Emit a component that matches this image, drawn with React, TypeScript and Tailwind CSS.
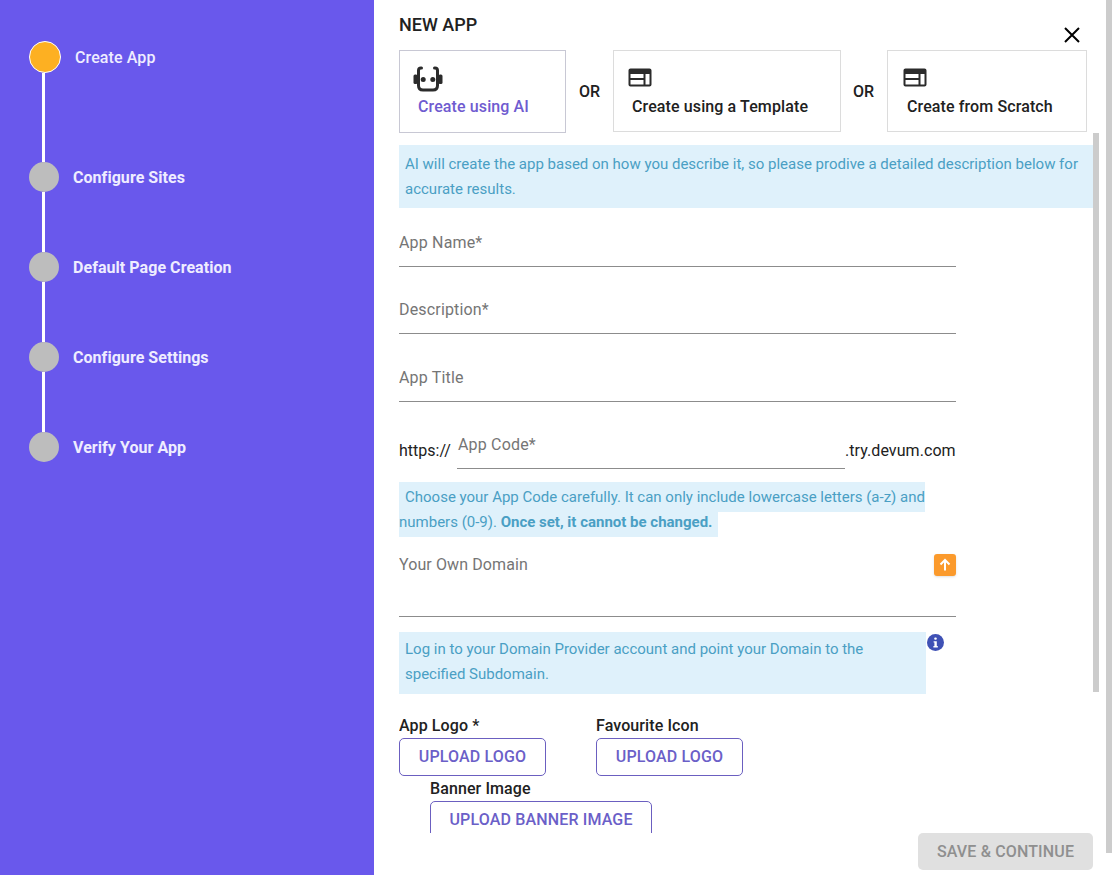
import React from "react";

const font = { fontFamily: "Roboto, 'Liberation Sans', sans-serif" };

function Bot() {
  return (
    <svg width="30" height="26" viewBox="0 0 30 26" fill="none">
      <path d="M8.5 2H8C6.6 2 5.5 3 5.5 4.5V19.5C5.5 22.5 7 24 10 24H20C23 24 24.5 22.5 24.5 19.5V4.5C24.5 3 23.4 2 22 2H21.5" stroke="#2b2b2b" strokeWidth="3" strokeLinecap="round" />
      <rect x="0.5" y="8.5" width="4" height="9.5" rx="1.5" fill="#2b2b2b" />
      <rect x="25.5" y="8.5" width="4" height="9.5" rx="1.5" fill="#2b2b2b" />
      <circle cx="10.2" cy="13.5" r="2.5" fill="#2b2b2b" />
      <circle cx="19.8" cy="13.5" r="2.5" fill="#2b2b2b" />
    </svg>
  );
}

function Layout() {
  return (
    <svg width="24" height="19" viewBox="0 0 24 19" fill="none">
      <path fillRule="evenodd" clipRule="evenodd" d="M2.5 0.5H21.5C22.6 0.5 23.5 1.4 23.5 2.5V16.5C23.5 17.6 22.6 18.5 21.5 18.5H2.5C1.4 18.5 0.5 17.6 0.5 16.5V2.5C0.5 1.4 1.4 0.5 2.5 0.5ZM2.5 6V10H15.5V6H2.5ZM17.5 6V16.5H21.5V6H17.5ZM2.5 12V16.5H15.5V12H2.5Z" fill="#2b2b2b" />
    </svg>
  );
}

function Step({ label, active, bold, line }: { label: string; active?: boolean; bold?: boolean; line?: string }) {
  return (
    <div className="flex flex-col">
      <div className="flex items-center gap-[14px]">
        {active ? (
          <div className="h-[32px] w-[32px] rounded-full border border-white bg-[#fdb022]" />
        ) : (
          <div className="h-[30px] w-[30px] rounded-full bg-[#bdbdbd]" />
        )}
        <span className={bold ? "pt-[2px] text-[16px] font-bold tracking-[0.05px] text-[#efedff]" : "pt-[2px] text-[16px] font-medium tracking-[0.1px] text-[#efedff]"}>{label}</span>
      </div>
      {line ? <div className={line} /> : null}
    </div>
  );
}

function Card({ w, h, label, purple, icon, iconBox, textBox }: { w: string; h: string; label: string; purple?: boolean; icon: React.ReactNode; iconBox: string; textBox: string }) {
  return (
    <div className={`${w} ${h} flex shrink-0 flex-col border ${purple ? "border-[#c8c8d4]" : "border-[#dcdcdc]"}`}>
      <div className={`${iconBox} flex items-end`}>{icon}</div>
      <div className={`${textBox} text-[16px] font-medium leading-[24px] tracking-[0.11px] ${purple ? "text-[#6f5bd0]" : "text-[#212121]"}`}>{label}</div>
    </div>
  );
}

function Field({ label, h }: { label: string; h: string }) {
  return (
    <div className={`${h} w-[557px] border-b border-[#8c8c8c] pt-[1px] text-[16px] leading-[24px] tracking-[0.17px] text-[#757575]`}>
      {label}
    </div>
  );
}

function UploadButton({ label, w }: { label: string; w: string }) {
  return (
    <div className={`${w} flex h-[38px] shrink-0 items-center justify-center rounded-[5px] border border-[#6b5fc0] text-[16px] font-medium tracking-[0.15px] text-[#6b5fc8]`}>
      {label}
    </div>
  );
}

export default function App() {
  return (
    <div className="flex h-[875px] w-[1112px] overflow-hidden bg-white" style={font}>
      <aside className="flex h-full w-[374px] shrink-0 flex-col bg-[#6958ec] pl-[29px] pt-[41px]">
        <Step label="Create App" active line="ml-[13px] h-[89px] w-[3px] bg-white" />
        <Step label="Configure Sites" bold line="ml-[13px] h-[60px] w-[3px] bg-white" />
        <Step label="Default Page Creation" bold line="ml-[13px] h-[60px] w-[3px] bg-white" />
        <Step label="Configure Settings" bold line="ml-[13px] h-[60px] w-[3px] bg-white" />
        <Step label="Verify Your App" bold />
      </aside>

      <main className="relative flex h-full w-[732px] shrink-0 flex-col pl-[25px]">
        <h1 className="pt-[14px] text-[18px] font-medium leading-[22px] text-[#212121]">NEW APP</h1>
        <svg className="absolute left-[690px] top-[27px]" width="16" height="16" viewBox="0 0 16 16" fill="none">
          <path d="M1 1L15 15M15 1L1 15" stroke="#000" strokeWidth="2" />
        </svg>

        <div className="mt-[14px] flex h-[83px] items-start">
          <Card w="w-[167px]" h="h-[83px]" label="Create using AI" purple iconBox="h-[41px] pl-[13px]" textBox="pl-[18px] pt-[3px]" icon={<Bot />} />
          <div className="flex h-[83px] w-[47px] shrink-0 items-center pl-[13px] text-[16px] font-medium text-[#212121]">OR</div>
          <Card w="w-[228px]" h="h-[82px]" label="Create using a Template" iconBox="h-[36px] pl-[14px]" textBox="pl-[18px] pt-[8px]" icon={<Layout />} />
          <div className="flex h-[83px] w-[46px] shrink-0 items-center pl-[12px] text-[16px] font-medium text-[#212121]">OR</div>
          <Card w="w-[200px]" h="h-[82px]" label="Create from Scratch" iconBox="h-[36px] pl-[15px]" textBox="pl-[19px] pt-[8px]" icon={<Layout />} />
        </div>

        <div className="flex h-[700px] shrink-0">
          <div className="h-full w-[694px] shrink-0 overflow-hidden pt-[12px]">
            <div className="h-[63px] bg-[#dff1fb] px-[6px] pt-[7px] text-[15px] leading-[25px] text-[#4a9fc4]">
              AI will create the app based on how you describe it, so please prodive a detailed description below for accurate results.
            </div>

            <Field label="App Name*" h="mt-[22px] h-[37px]" />
            <Field label="Description*" h="mt-[30px] h-[37px]" />
            <Field label="App Title" h="mt-[31px] h-[37px]" />

            <div className="mt-[31px] flex h-[36px] w-[557px] items-end">
              <div className="w-[58px] shrink-0 pb-[6px] text-[16px] leading-[24px] text-[#212121]">https://</div>
              <div className="h-[36px] w-[388px] shrink-0 border-b border-[#8c8c8c] pl-[1px] text-[16px] leading-[24px] tracking-[0.17px] text-[#757575]">App Code*</div>
              <div className="pb-[6px] text-[16px] leading-[24px] tracking-[0.07px] text-[#212121]">.try.devum.com</div>
            </div>

            <div className="mt-[16px] w-[557px] text-[15px] leading-[25px] text-[#4a9fc4]">
              <span className="bg-[#dff1fb] box-decoration-slice py-[6px] pl-[6px] pr-[6px]">
                Choose your App Code carefully. It can only include lowercase letters (a-z) and numbers (0-9). <b>Once set, it cannot be changed.</b>
              </span>
            </div>

            <div className="relative mt-[18px] h-[64px] w-[557px] border-b border-[#8c8c8c] text-[16px] leading-[24px] tracking-[0.1px] text-[#757575]">
              Your Own Domain
              <div className="absolute right-0 top-[1px] flex h-[22px] w-[22px] items-center justify-center rounded-[3px] bg-[#fb9a2c] shadow-sm">
                <svg width="14" height="14" viewBox="0 0 14 14" fill="none">
                  <path d="M7 12.5V2M2.5 6.5L7 2L11.5 6.5" stroke="#fff" strokeWidth="2" />
                </svg>
              </div>
            </div>

            <div className="relative mt-[15px] h-[62px] w-[527px] bg-[#dff1fb] px-[6px] pt-[5px] text-[15px] leading-[25px] text-[#4a9fc4]">
              Log in to your Domain Provider account and point your Domain to the specified Subdomain.
              <div className="absolute left-[528px] top-[2px] flex h-[17px] w-[17px] items-center justify-center rounded-full bg-[#3f51b5]">
                <svg width="9" height="11" viewBox="0 0 9 11" fill="#fff">
                  <rect x="3.2" y="0.6" width="2.6" height="2.2" rx="1" />
                  <path d="M2.6 4.2H5.8V9H6.8V10.4H2.4V9H3.4V5.6H2.6Z" />
                </svg>
              </div>
            </div>

            <div className="mt-[22px] flex">
              <div className="w-[197px] shrink-0">
                <div className="text-[16px] font-medium leading-[20px] tracking-[0.1px] text-[#212121]">App Logo *</div>
                <UploadButton label="UPLOAD LOGO" w="w-[147px] mt-[2px]" />
              </div>
              <div>
                <div className="text-[16px] font-medium leading-[20px] tracking-[0.1px] text-[#212121]">Favourite Icon</div>
                <UploadButton label="UPLOAD LOGO" w="w-[147px] mt-[2px]" />
              </div>
            </div>
            <div className="pl-[31px] pt-[3px]">
              <div className="text-[16px] font-medium leading-[20px] tracking-[0.1px] text-[#212121]">Banner Image</div>
              <UploadButton label="UPLOAD BANNER IMAGE" w="w-[222px] mt-[2px]" />
            </div>
          </div>
          <div className="h-[559px] w-[6px] shrink-0 bg-[#cccccc]" />
        </div>

        <div className="flex w-[694px] justify-end">
          <div className="flex h-[37px] w-[175px] items-center justify-center rounded-[5px] bg-[#e0e0e0] text-[16px] font-medium tracking-[0.15px] text-[#8f8f8f]">
            SAVE &amp; CONTINUE
          </div>
        </div>
      </main>

      <div className="h-[853px] w-[6px] shrink-0 bg-[#cccccc]" />
    </div>
  );
}
